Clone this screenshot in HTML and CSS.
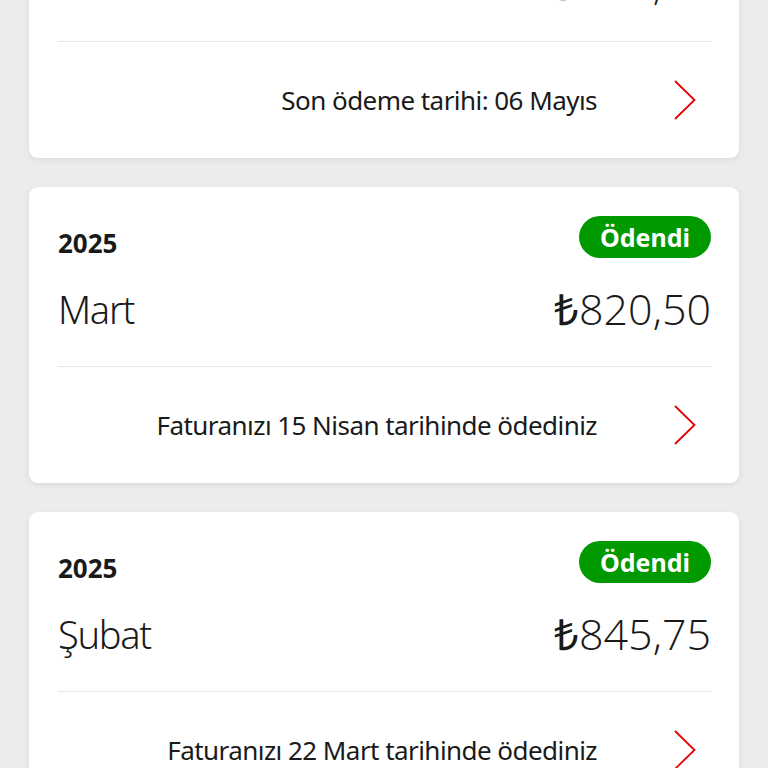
FILE: index.html
```html
<!DOCTYPE html>
<html lang="tr">
<head>
<meta charset="utf-8">
<title>Faturalar</title>
<link rel="stylesheet" href="styles.css">
</head>
<body>
<main class="list">
  <section class="card card-first">
    <div class="card-head">
      <span class="year">2025</span>
      <span class="badge badge-due">Ödenmedi</span>
    </div>
    <div class="card-main">
      <span class="month">Nisan</span>
      <span class="amount">₺830,00</span>
    </div>
    <div class="card-foot">
      <span class="foot-text">Son ödeme tarihi: 06 Mayıs</span>
      <svg class="chev" viewBox="0 0 22 40" width="22" height="40"><polyline points="1,1 20.5,20 1,39"/></svg>
    </div>
  </section>
  <section class="card">
    <div class="card-head">
      <span class="year">2025</span>
      <span class="badge">Ödendi</span>
    </div>
    <div class="card-main">
      <span class="month">Mart</span>
      <span class="amount">₺820,50</span>
    </div>
    <div class="card-foot">
      <span class="foot-text">Faturanızı 15 Nisan tarihinde ödediniz</span>
      <svg class="chev" viewBox="0 0 22 40" width="22" height="40"><polyline points="1,1 20.5,20 1,39"/></svg>
    </div>
  </section>
  <section class="card">
    <div class="card-head">
      <span class="year">2025</span>
      <span class="badge">Ödendi</span>
    </div>
    <div class="card-main">
      <span class="month">Şubat</span>
      <span class="amount">₺845,75</span>
    </div>
    <div class="card-foot">
      <span class="foot-text">Faturanızı 22 Mart tarihinde ödediniz</span>
      <svg class="chev" viewBox="0 0 22 40" width="22" height="40"><polyline points="1,1 20.5,20 1,39"/></svg>
    </div>
  </section>
</main>
</body>
</html>
```

FILE: styles.css
```css
html, body {
  margin: 0;
  padding: 0;
}
body {
  background: #ececec;
  color: #1a1a1a;
  font-family: "Noto Sans", "DejaVu Sans", sans-serif;
  overflow: hidden;
  height: 768px;
}
.list {
  display: flex;
  flex-direction: column;
  gap: 29px;
  padding: 0 29px;
  margin-top: -138px;
}
.card {
  background: #fff;
  border-radius: 9px;
  box-shadow: 0 2px 6px rgba(0, 0, 0, 0.07);
  padding: 29px 28px 0 29px;
}
.card-head {
  display: flex;
  justify-content: space-between;
  align-items: flex-end;
  height: 42px;
}
.year {
  font-weight: bold;
  font-size: 26px;
  line-height: 30px;
}
.badge {
  height: 42px;
  line-height: 42px;
  padding: 0 21px;
  border-radius: 21px;
  background: #009900;
  color: #fff;
  font-weight: bold;
  font-size: 25px;
}
.card-main {
  display: flex;
  justify-content: space-between;
  align-items: center;
  height: 50px;
  margin-top: 26px;
}
.month {
  font-size: 38px;
  font-weight: 300;
  line-height: 50px;
  letter-spacing: -1.3px;
}
.amount {
  font-family: "Open Sans", sans-serif;
  font-weight: 300;
  font-size: 43px;
  line-height: 50px;
}
.card-foot {
  border-top: 1px solid #e6e6e6;
  margin-top: 32px;
  height: 116px;
  display: flex;
  align-items: center;
  justify-content: flex-end;
  gap: 77px;
  padding-right: 15px;
}
.foot-text {
  font-size: 26px;
  letter-spacing: -0.55px;
}
.chev {
  display: block;
}
.chev polyline {
  fill: none;
  stroke: #e60000;
  stroke-width: 1.8;
}
```
